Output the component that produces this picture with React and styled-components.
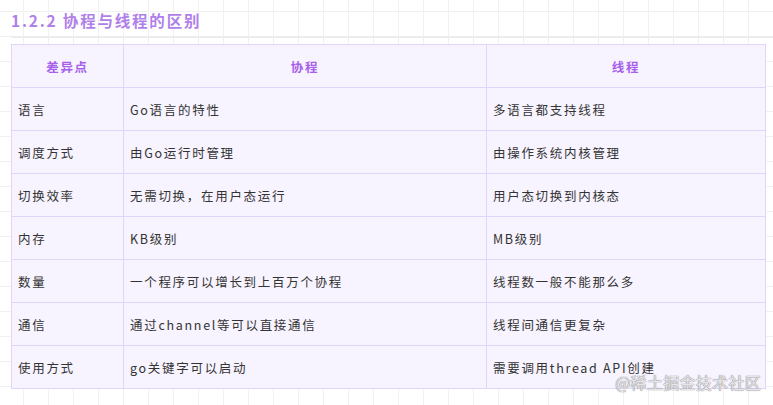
import React from 'react';
import styled, { createGlobalStyle } from 'styled-components';

const GlobalStyle = createGlobalStyle`
    html, body {
        margin: 0;
        padding: 0;
    }
    body {
        background-color: #ffffff;
        background-image:
            linear-gradient(90deg, #f1f1f1 1px, transparent 1px),
            linear-gradient(0deg, #f1f1f1 1px, transparent 1px);
        background-size: 25px 25px;
        background-position: 23px 12px;
        font-family: "Noto Sans CJK SC", "Noto Sans", sans-serif;
        width: 773px;
        height: 405px;
        overflow: hidden;
    }
`;

const Page = styled.div`
    position: relative;
    width: 773px;
    height: 405px;
    padding: 10px 0 0 11px;
    box-sizing: border-box;
`;

const Heading = styled.h3`
    margin: 0;
    padding-bottom: 6px;
    font-size: 15.5px;
    line-height: 20px;
    font-weight: 700;
    letter-spacing: 1.8px;
    color: #b07fe9;
    border-bottom: 2px solid #ececec;
`;

const Table = styled.table`
    margin-top: 6px;
    width: 755px;
    border-collapse: collapse;
    background: #f7f3ff;
    font-size: 12.5px;
    letter-spacing: 1.7px;
    color: #333;
`;

const Th = styled.th`
    height: 42px;
    padding: 0 6px;
    border: 1px solid #e1d6fa;
    color: #a660eb;
    font-weight: 700;
    text-align: center;
    width: ${props => props.$w}px;
`;

const Td = styled.td`
    height: 42px;
    padding: 0 6px;
    border: 1px solid #e1d6fa;
    text-align: left;
`;

const Watermark = styled.div`
    position: absolute;
    right: 12px;
    bottom: 11px;
    font-size: 16px;
    letter-spacing: 0.3px;
    color: #e6e6e8;
    text-shadow: 0 0 1px #777, 0 0 1px #999;
`;

const rows = [
    ['语言', 'Go语言的特性', '多语言都支持线程'],
    ['调度方式', '由Go运行时管理', '由操作系统内核管理'],
    ['切换效率', '无需切换，在用户态运行', '用户态切换到内核态'],
    ['内存', 'KB级别', 'MB级别'],
    ['数量', '一个程序可以增长到上百万个协程', '线程数一般不能那么多'],
    ['通信', '通过channel等可以直接通信', '线程间通信更复杂'],
    ['使用方式', 'go关键字可以启动', '需要调用thread API创建'],
];

export default function App() {
    return (
        <>
            <GlobalStyle />
            <Page>
                <Heading>1.2.2 协程与线程的区别</Heading>
                <Table>
                    <thead>
                        <tr>
                            <Th $w={99}>差异点</Th>
                            <Th $w={350}>协程</Th>
                            <Th>线程</Th>
                        </tr>
                    </thead>
                    <tbody>
                        {rows.map(r => (
                            <tr key={r[0]}>
                                <Td>{r[0]}</Td>
                                <Td>{r[1]}</Td>
                                <Td>{r[2]}</Td>
                            </tr>
                        ))}
                    </tbody>
                </Table>
                <Watermark>@稀土掘金技术社区</Watermark>
            </Page>
        </>
    );
}
